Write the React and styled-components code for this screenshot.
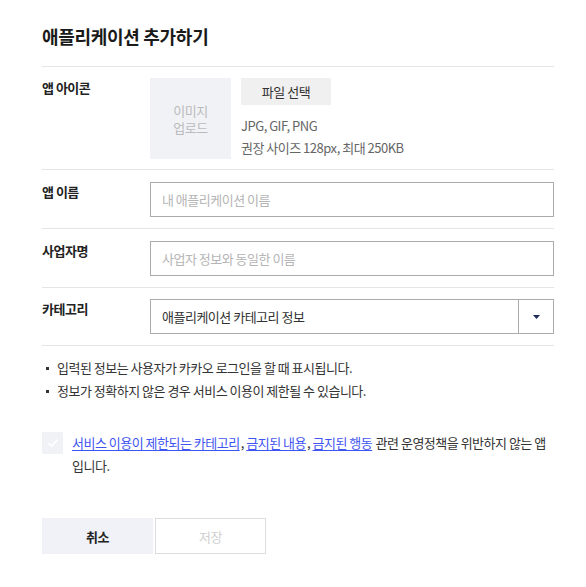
import styled, { createGlobalStyle } from 'styled-components'

const GlobalStyle = createGlobalStyle`
  body {
    margin: 0;
    background: #ffffff;
    font-family: "Noto Sans CJK KR", "Noto Sans", sans-serif;
    color: #333;
  }
`

const Page = styled.div`
  width: 512px;
  padding: 0 32px 0 42px;
  letter-spacing: -0.5px;
`

const Title = styled.h1`
  margin: 0;
  padding: 24px 0 18px;
  font-size: 18px;
  line-height: 24px;
  font-weight: 700;
  letter-spacing: -0.3px;
  color: #1a1a1a;
  border-bottom: 1px solid #e5e5e5;
`

const Row = styled.div`
  display: flex;
  padding: ${p => p.$pad || '12px 0 11px'};
  border-bottom: 1px solid #e5e5e5;
`

const Label = styled.div`
  width: 108px;
  flex-shrink: 0;
  font-size: 13px;
  font-weight: 700;
  color: #222;
  line-height: ${p => p.$lh || '20px'};
`

const Field = styled.div`
  flex: 1;
  display: flex;
  gap: 10px;
`

const UploadBox = styled.div`
  width: 81px;
  height: 81px;
  background: #f1f2f6;
  color: #bbb;
  font-size: 13px;
  line-height: 17px;
  display: flex;
  align-items: center;
  justify-content: center;
  text-align: center;
`

const UploadInfo = styled.div`
  display: flex;
  flex-direction: column;
  align-items: flex-start;
`

const FileButton = styled.button`
  width: 90px;
  height: 27px;
  border: none;
  background: #f0f0f0;
  font-family: inherit;
  font-size: 13px;
  letter-spacing: -0.5px;
  color: #333;
  padding: 0;
  margin-bottom: 10px;
`

const Hint = styled.div`
  font-size: 13px;
  line-height: 22px;
  color: #666;
`

const Input = styled.input`
  flex: 1;
  box-sizing: border-box;
  height: 35px;
  border: 1px solid #ababab;
  padding: 0 11px;
  font-family: inherit;
  font-size: 13px;
  letter-spacing: -0.5px;
  color: #333;
  outline: none;

  &::placeholder {
    color: #b5b5b5;
  }
`

const Select = styled.div`
  flex: 1;
  display: flex;
  height: 35px;
  box-sizing: border-box;
  border: 1px solid #ababab;
`

const SelectValue = styled.div`
  flex: 1;
  padding: 0 11px;
  font-size: 13px;
  line-height: 33px;
  color: #333;
`

const SelectArrow = styled.div`
  width: 34px;
  border-left: 1px solid #ababab;
  display: flex;
  align-items: center;
  justify-content: center;
`

const Notes = styled.ul`
  margin: 0;
  padding: 10px 0 0;
  list-style: none;
`

const Note = styled.li`
  position: relative;
  padding-left: 15px;
  font-size: 13px;
  line-height: 23px;
  color: #333;

  &::before {
    content: '';
    position: absolute;
    left: 4px;
    top: 11px;
    width: 3px;
    height: 3px;
    background: #333;
  }
`

const Agree = styled.div`
  display: flex;
  gap: 9px;
  margin-top: 29px;
`

const CheckBox = styled.div`
  width: 21px;
  height: 22px;
  flex-shrink: 0;
  background: #f1f2f6;
  display: flex;
  align-items: center;
  justify-content: center;
  margin-top: 1px;
`

const AgreeText = styled.div`
  font-size: 13px;
  line-height: 23px;
  color: #333;
`

const Link = styled.a`
  color: #3f55f2;
  text-decoration: underline;
  text-underline-offset: 2px;
  margin-right: 1px;
`

const Actions = styled.div`
  display: flex;
  gap: 2px;
  margin-top: 41px;
`

const Button = styled.button`
  width: 111px;
  height: 36px;
  box-sizing: border-box;
  font-family: inherit;
  font-size: 13px;
  letter-spacing: -0.5px;
  font-weight: ${p => (p.$primary ? 700 : 400)};
  background: ${p => (p.$primary ? '#f1f2f8' : '#fff')};
  color: ${p => (p.$primary ? '#222' : '#d0d0d0')};
  border: ${p => (p.$primary ? 'none' : '1px solid #dcdcdc')};
  padding: 0;
`

export default function App() {
  return (
    <Page>
      <GlobalStyle />
      <Title>애플리케이션 추가하기</Title>

      <Row $pad="11px 0 10px">
        <Label $lh="19px">앱 아이콘</Label>
        <Field>
          <UploadBox>이미지<br />업로드</UploadBox>
          <UploadInfo>
            <FileButton>파일 선택</FileButton>
            <Hint>JPG, GIF, PNG</Hint>
            <Hint>권장 사이즈 128px, 최대 250KB</Hint>
          </UploadInfo>
        </Field>
      </Row>

      <Row>
        <Label>앱 이름</Label>
        <Field>
          <Input placeholder="내 애플리케이션 이름" />
        </Field>
      </Row>

      <Row>
        <Label>사업자명</Label>
        <Field>
          <Input placeholder="사업자 정보와 동일한 이름" />
        </Field>
      </Row>

      <Row $pad="11px 0">
        <Label>카테고리</Label>
        <Field>
          <Select>
            <SelectValue>애플리케이션 카테고리 정보</SelectValue>
            <SelectArrow>
              <svg width="7" height="4" viewBox="0 0 7 4">
                <path d="M0 0h7L3.5 4z" fill="#1c2a5c" />
              </svg>
            </SelectArrow>
          </Select>
        </Field>
      </Row>

      <Notes>
        <Note>입력된 정보는 사용자가 카카오 로그인을 할 때 표시됩니다.</Note>
        <Note>정보가 정확하지 않은 경우 서비스 이용이 제한될 수 있습니다.</Note>
      </Notes>

      <Agree>
        <CheckBox>
          <svg width="12" height="10" viewBox="0 0 12 10">
            <path d="M1.5 5.2l3 3 6-6.5" fill="none" stroke="#fff" strokeWidth="1.8" />
          </svg>
        </CheckBox>
        <AgreeText>
          <Link>서비스 이용이 제한되는 카테고리</Link>, <Link>금지된 내용</Link>,{' '}
          <Link>금지된 행동</Link> 관련 운영정책을 위반하지 않는 앱 입니다.
        </AgreeText>
      </Agree>

      <Actions>
        <Button $primary>취소</Button>
        <Button>저장</Button>
      </Actions>
    </Page>
  )
}
